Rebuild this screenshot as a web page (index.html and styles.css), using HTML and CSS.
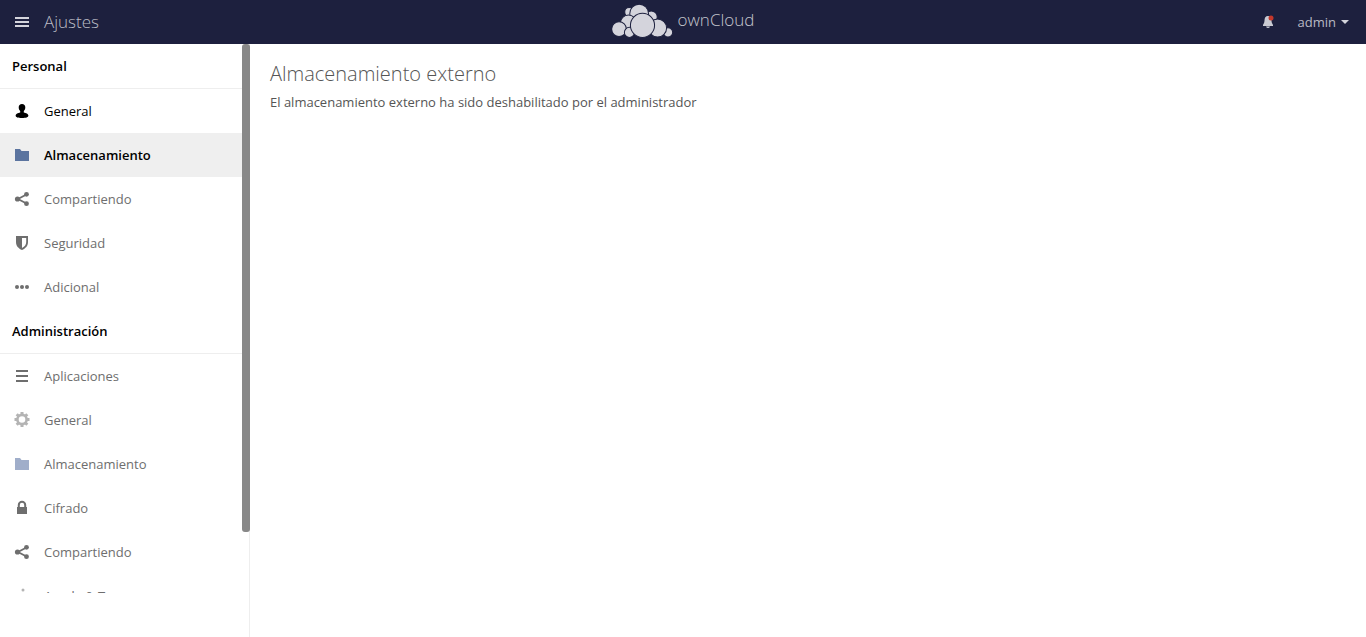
FILE: index.html
```html
<!DOCTYPE html>
<html lang="es">
<head>
<meta charset="utf-8">
<title>Ajustes - ownCloud</title>
<link rel="stylesheet" href="styles.css">
</head>
<body>
<svg class="sprite" aria-hidden="true">
  <symbol id="share" viewBox="0 0 16 16"><path d="M12.500 3.500 4 8l8.500 4.500" fill="none" stroke="currentColor" stroke-width="1.800"/><circle cx="12.500" cy="3.300" r="2.400"/><circle cx="3.500" cy="8" r="2.600"/><circle cx="12.500" cy="12.700" r="2.400"/></symbol>
  <symbol id="folder" viewBox="0 0 16 16"><path d="M1 2h5l1.500 2H15v10H1z"/></symbol>
  <symbol id="lines" viewBox="0 0 16 16"><path d="M2 2h12v2H2zM2 7h12v2H2zM2 12h12v2H2z"/></symbol>
</svg>
<header class="topbar">
  <button class="apps" type="button" aria-label="Menú de aplicaciones">
    <svg class="icon" viewBox="0 0 16 16"><path d="M1 3h14v2H1zM1 7h14v2H1zM1 11h14v2H1z"/></svg>
    <span class="apps-title">Ajustes</span>
  </button>
  <a class="brand" href="#">
    <svg class="cloud" viewBox="23 14 182 98" aria-hidden="true">
      <circle cx="74" cy="36" r="13"/><circle cx="140" cy="51" r="18"/>
      <circle cx="104" cy="41" r="28"/>
      <circle cx="72" cy="69" r="24"/><circle cx="44" cy="87" r="22"/>
      <circle cx="190" cy="97" r="14"/><circle cx="159" cy="84" r="27"/>
      <circle cx="75" cy="97" r="15"/><circle cx="114" cy="76" r="36"/>
    </svg>
    <span>ownCloud</span>
  </a>
  <div class="tools">
    <button class="bell" type="button" aria-label="Notificaciones">
      <svg class="icon" viewBox="0 0 16 16"><path d="M8 2C5.500 2 4.500 4 4.500 6.500 4.500 9 3.500 9.500 3 11v1h10v-1c-.5-1.500-1.500-2-1.500-4.500C11.500 4 10.500 2 8 2zM6 12.500h4q-.5 1.500-2 1.500t-2-1.500z"/><circle class="dot" cx="11" cy="4" r="2.500"/></svg>
    </button>
    <button class="user" type="button">admin<svg class="caret" viewBox="0 0 8 4" aria-hidden="true"><path d="M0 0h8L4 4z"/></svg></button>
  </div>
</header>
<div class="layout">
  <nav class="sidebar" aria-label="Ajustes">
    <div class="scroller">
      <h2 class="group">Personal</h2>
      <ul class="menu">
        <li><a class="item hover" href="#"><svg class="icon" viewBox="0 0 16 16"><path d="M8 1C5.900 1 4.700 2.400 4.700 4.300c0 1.700.6 2.900 1.500 3.700v1.500C4 10.200 1.600 10.800 1.600 12.500 1.600 14.300 4 15 8 15s6.400-.7 6.400-2.500c0-1.700-2.400-2.300-4.600-3V8c.9-.8 1.500-2 1.500-3.700C11.300 2.400 10.100 1 8 1z"/></svg>General</a></li>
        <li><a class="item active" href="#" aria-current="page"><svg class="icon blue"><use href="#folder"/></svg>Almacenamiento</a></li>
        <li><a class="item" href="#"><svg class="icon"><use href="#share"/></svg>Compartiendo</a></li>
        <li><a class="item" href="#"><svg class="icon" viewBox="0 0 16 16"><path fill-rule="evenodd" d="M2 1h12v6c0 4-2.500 6.500-6 8C4.500 13.500 2 11 2 7zM8 3v10c2.800-1.500 4.200-3.500 4.200-6V3z"/></svg>Seguridad</a></li>
        <li><a class="item" href="#"><svg class="icon" viewBox="0 0 16 16"><circle cx="3" cy="8" r="2"/><circle cx="8" cy="8" r="2"/><circle cx="13" cy="8" r="2"/></svg>Adicional</a></li>
      </ul>
      <h2 class="group">Administración</h2>
      <ul class="menu">
        <li><a class="item" href="#"><svg class="icon"><use href="#lines"/></svg>Aplicaciones</a></li>
        <li><a class="item" href="#"><svg class="icon gear" viewBox="0 0 16 16"><circle cx="8" cy="7.500" r="4.600" fill="none" stroke="currentColor" stroke-width="2.600"/><path d="M8 0v3M8 12v3M.5 7.500h3M12.500 7.500h3M2.700 2.200l2 2M11.300 10.800l2 2M13.300 2.200l-2 2M4.700 10.800l-2 2" stroke="currentColor" stroke-width="3"/></svg>General</a></li>
        <li><a class="item" href="#"><svg class="icon paleblue"><use href="#folder"/></svg>Almacenamiento</a></li>
        <li><a class="item" href="#"><svg class="icon" viewBox="0 0 16 16"><path d="M4.800 8V5a3.200 3.200 0 0 1 6.400 0v3" fill="none" stroke="currentColor" stroke-width="2"/><path d="M3 7h10v7H3z"/></svg>Cifrado</a></li>
        <li><a class="item" href="#"><svg class="icon"><use href="#share"/></svg>Compartiendo</a></li>
        <li><a class="item" href="#"><svg class="icon gear" viewBox="0 0 16 16"><circle cx="9" cy="2" r="1.500"/><path d="M6 6h4v7h1v2H6v-2h1V8H6z"/></svg>Ayuda &amp; Trucos</a></li>
      </ul>
    </div>
    <div class="thumb"></div>
  </nav>
  <main class="content">
    <h1 class="title">Almacenamiento externo</h1>
    <p class="text">El almacenamiento externo ha sido deshabilitado por el administrador</p>
  </main>
</div>
</body>
</html>
```

FILE: styles.css
```css
* { box-sizing: border-box; }
body {
  display: flex;
  flex-direction: column;
  height: 100vh;
  margin: 0;
  overflow: hidden;
  background: #fff;
  color: #555;
  font: 13px/20px "Open Sans", sans-serif;
}
button {
  padding: 0;
  border: 0;
  background: none;
  color: inherit;
  font: inherit;
  cursor: pointer;
}
a { color: inherit; text-decoration: none; }
.sprite { position: absolute; width: 0; height: 0; }
.icon { display: block; flex: none; width: 16px; height: 16px; fill: currentColor; }

.topbar {
  display: grid;
  grid-template-columns: 1fr auto 1fr;
  flex: none;
  height: 44px;
  padding: 0 14px;
  background: #1d203e;
  color: #d4d4dc;
}
.apps { display: flex; align-items: center; gap: 14px; justify-self: start; }
.apps-title { color: #bbbcc5; font-size: 17px; font-weight: 300; line-height: 44px; }
.brand {
  display: flex;
  gap: 5px;
  padding-top: 4px;
  color: #c4c5cd;
  font-size: 17px;
  font-weight: 300;
  line-height: 32px;
}
.cloud { width: 61px; height: 34px; fill: #d4d4dc; stroke: #1d203e; stroke-width: 3px; }
.tools { display: flex; align-items: center; justify-self: end; gap: 22px; padding-right: 3px; }
.bell { color: #c9cad2; }
.dot { fill: #c4372b; }
.user { display: flex; align-items: center; gap: 5px; color: #b9bac4; }
.caret { width: 8px; height: 4px; fill: #d4d4dc; }

.layout { display: flex; flex: 1; min-height: 0; }
.sidebar {
  position: relative;
  flex: none;
  width: 250px;
  padding: 0 7px 44px 0;
  border-right: 1px solid #eee;
}
.scroller { height: 100%; overflow: hidden; }
.thumb {
  position: absolute;
  top: 0;
  right: -1px;
  width: 8px;
  height: 488px;
  border-radius: 3px;
  background: #888;
}
.group {
  margin: 0;
  padding: 0 12px;
  border-bottom: 1px solid #eee;
  color: #000;
  font-size: 13px;
  font-weight: 600;
  line-height: 44px;
}
.menu { margin: 0; padding: 0; list-style: none; }
.item {
  display: flex;
  align-items: center;
  gap: 14px;
  height: 44px;
  padding: 0 14px;
  color: #6e6e6e;
}
.hover, .active { color: #000; }
.active { background: #efefef; font-weight: 600; }
.blue { color: #5b749f; }
.paleblue { color: #a0aeca; }
.gear { color: #b4b4b4; }

.content { flex: 1; padding: 15px 20px; }
.title { margin: 0 0 3px; font-size: 20px; font-weight: 300; line-height: 30px; }
.text { margin: 0; }
```
